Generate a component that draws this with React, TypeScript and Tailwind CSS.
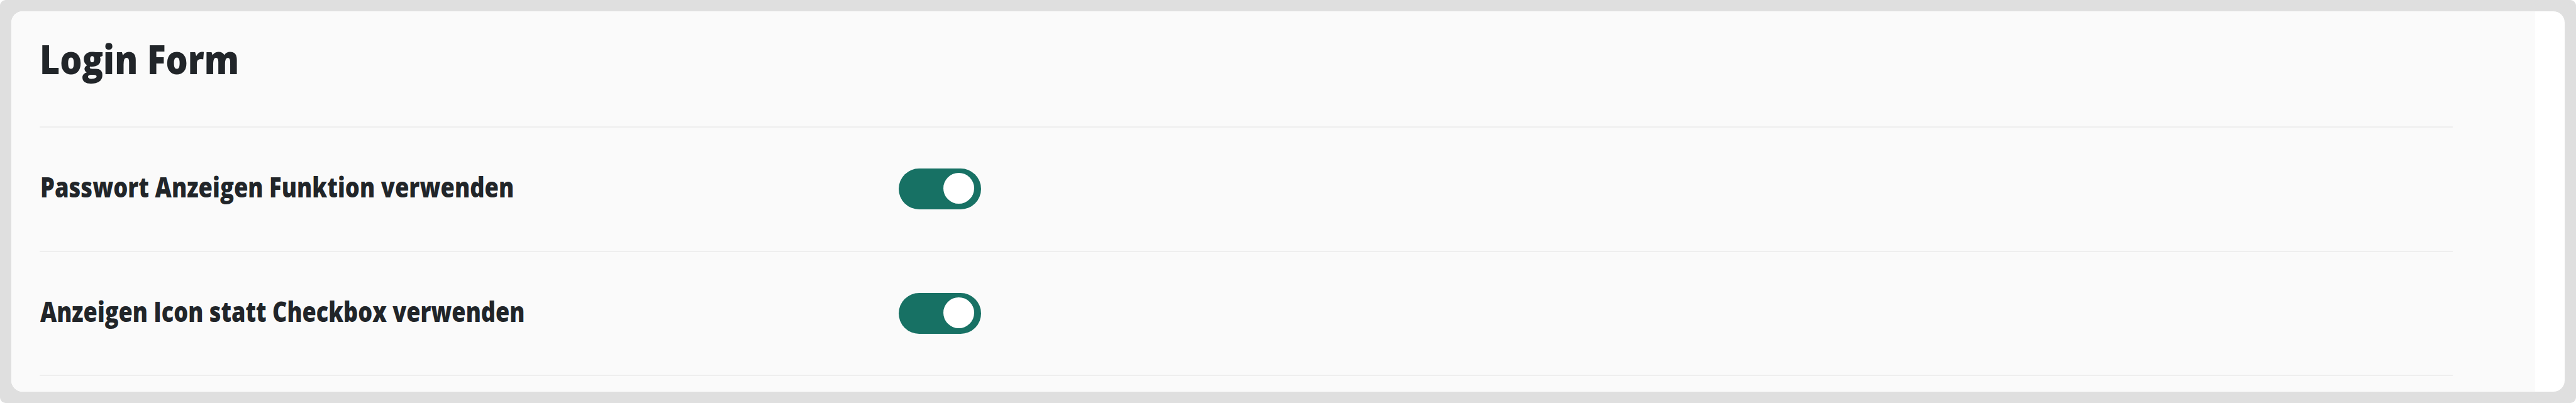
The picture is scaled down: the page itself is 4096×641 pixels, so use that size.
import React, { useState } from 'react';

interface SettingRowProps {
  label: string;
  labelClassName: string;
}

const SettingRow: React.FC<SettingRowProps> = ({ label, labelClassName }) => {
  const [enabled, setEnabled] = useState(true);

  return (
    <div className="flex h-[197.5px] items-center border-t-2 border-[#eeeeee]">
      <div className="w-[1366px] shrink-0 pb-[5px] pl-px">
        <span className={`inline-block origin-left whitespace-nowrap text-[43.4px] font-extrabold leading-none ${labelClassName}`}>
          {label}
        </span>
      </div>
      <button
        type="button"
        role="switch"
        aria-checked={enabled}
        aria-label={label}
        onClick={() => setEnabled(!enabled)}
        className={`flex h-[65.2px] w-[130.4px] shrink-0 rounded-full pt-[7.2px] ${
          enabled ? 'justify-end bg-[#177164] pr-[10.9px]' : 'justify-start bg-gray-400 pl-[10.9px]'
        }`}
      >
        <span className="size-[48.9px] rounded-full bg-white" />
      </button>
    </div>
  );
};

const App: React.FC = () => {
  return (
    <div className="h-[641px] w-[4096px] bg-white font-['Open_Sans',sans-serif] text-[#212529]">
      <div className="h-full rounded-[9px] bg-[#dfdfdf] p-[18px]">
        <div className="h-full overflow-hidden rounded-[18px] bg-white">
          <div className="h-full w-[4013px] bg-[#fafafa] pl-[45.4px] pr-[130.6px]">
            <div className="h-[183px] pt-[44px]">
              <h1 className="inline-block origin-left scale-x-[0.874] whitespace-nowrap text-[63.4px] font-extrabold leading-none">
                Login Form
              </h1>
            </div>
            <SettingRow label="Passwort Anzeigen Funktion verwenden" labelClassName="scale-x-[0.837]" />
            <SettingRow label="Anzeigen Icon statt Checkbox verwenden" labelClassName="scale-x-[0.831]" />
            <div className="border-t-2 border-[#eeeeee]" />
          </div>
        </div>
      </div>
    </div>
  );
};

export default App;
